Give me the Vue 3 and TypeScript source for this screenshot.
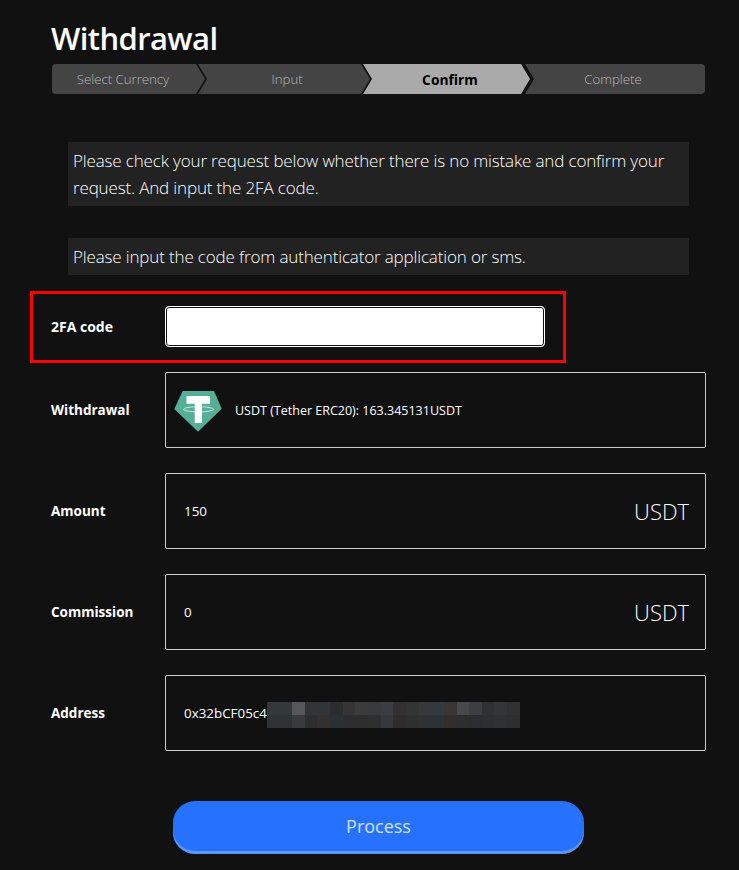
<script setup lang="ts">
const steps = [
  { label: 'Select Currency', cls: 'first' },
  { label: 'Input', cls: 'second' },
  { label: 'Confirm', cls: 'third active' },
  { label: 'Complete', cls: 'last' }
]

// pixelated part of the address, two rows of blocks
const topRow = ['#33383b', '#33383b', '#55575a', '#333436', '#313538', '#2d2d30', '#353535', '#3c3b3b', '#3a3a3c', '#3c3d42', '#313131', '#333534', '#363839', '#2f3b3e', '#3b3434', '#47484a', '#3e3e42', '#2f3133', '#333537', '#303132']
const bottomRow = ['#2f3336', '#2f3336', '#383a3b', '#2c2d2f', '#333130', '#2b3033', '#2c2d30', '#2d2d2d', '#2e3030', '#37383e', '#2e2d2c', '#2e2f2f', '#2f3234', '#2b3336', '#332d2d', '#2d2e30', '#2c2d31', '#2c2e30', '#2f3032', '#2d2e2f']
const blur = [...topRow, ...bottomRow]
</script>

<template>
  <div class="page">
    <h1>Withdrawal</h1>

    <ul class="stepper">
      <li v-for="s in steps" :key="s.label" :class="['step', s.cls]">{{ s.label }}</li>
    </ul>

    <p class="notice first-notice">
      Please check your request below whether there is no mistake and confirm your request. And input the 2FA code.
    </p>
    <p class="notice second-notice">Please input the code from authenticator application or sms.</p>

    <div class="code-row">
      <label class="label" for="code">2FA code</label>
      <input id="code" class="code-input" type="text" />
      <div class="highlight"></div>
    </div>

    <div class="row">
      <span class="label">Withdrawal</span>
      <div class="field">
        <svg class="coin" viewBox="0 0 48 42" width="48" height="42">
          <polygon points="8.7,0 40,0 47.7,17.8 24,40.7 0.3,18" fill="#55ae96" />
          <path d="M12.500 5h23.500v7.700h-8V32h-7.300V12.700h-8.200z" fill="#fff" />
          <ellipse cx="24.500" cy="18.300" rx="15" ry="2.600" fill="none" stroke="#fff" stroke-width="0.800" opacity="0.850" />
        </svg>
        <span class="coin-text">USDT (Tether ERC20): 163.345131USDT</span>
      </div>
    </div>

    <div class="row">
      <span class="label">Amount</span>
      <div class="field value">
        <span>150</span>
        <span class="unit">USDT</span>
      </div>
    </div>

    <div class="row">
      <span class="label">Commission</span>
      <div class="field value">
        <span>0</span>
        <span class="unit">USDT</span>
      </div>
    </div>

    <div class="row">
      <span class="label">Address</span>
      <div class="field address">
        <span>0x32bCF05c4</span>
        <div class="mosaic">
          <i v-for="(c, i) in blur" :key="i" :style="{ background: c }"></i>
        </div>
      </div>
    </div>

    <div class="actions">
      <button class="process" type="button">Process</button>
    </div>
  </div>
</template>

<style>
html,
body {
  background: #111;
}
</style>

<style scoped>
.page {
  box-sizing: border-box;
  width: 739px;
  height: 870px;
  padding: 18px 33px 0 51px;
  background: #111;
  color: #fff;
  font-family: "Open Sans", "Liberation Sans", sans-serif;
  overflow: hidden;
}

h1 {
  margin: 0;
  height: 46px;
  font-size: 31px;
  line-height: 40px;
  font-weight: 600;
  letter-spacing: -0.6px;
}

.stepper {
  display: flex;
  width: 653px;
  height: 30px;
  margin: 0 0 0 1px;
  padding: 0;
  list-style: none;
  border-radius: 4px;
  overflow: hidden;
}

.step {
  box-sizing: border-box;
  display: flex;
  align-items: center;
  justify-content: center;
  margin-left: -6px;
  background: #444;
  color: #b8b8b8;
  font-size: 13.200px;
  font-weight: 300;
  clip-path: polygon(0 0, calc(100% - 9px) 0, 100% 50%, calc(100% - 9px) 100%, 0 100%, 9px 50%);
}

.step.first {
  width: 153px;
  margin-left: 0;
  padding-right: 11px;
  clip-path: polygon(0 0, calc(100% - 9px) 0, 100% 50%, calc(100% - 9px) 100%, 0 100%);
}

.step.second {
  width: 172px;
  margin-left: -7px;
  padding-left: 6px;
}

.step.third {
  width: 167px;
  margin-left: -7px;
  padding-left: 7px;
}

.step.last {
  width: 180px;
  margin-left: -5px;
  padding-right: 4px;
  clip-path: polygon(0 0, 100% 0, 100% 100%, 0 100%, 9px 50%);
}

.step.active {
  background: #aaa;
  color: #000;
  font-size: 13.800px;
  font-weight: 700;
}

.notice {
  box-sizing: border-box;
  width: 621px;
  margin: 0 0 0 17px;
  padding: 6px 5px;
  background: #222;
  font-size: 17px;
  line-height: 27px;
  font-weight: 300;
  letter-spacing: -0.150px;
}

.first-notice {
  height: 64px;
  margin-top: 48px;
  padding-top: 5px;
}

.second-notice {
  height: 37px;
  margin-top: 32px;
  padding-top: 5px;
}

.label {
  font-size: 13.500px;
  font-weight: 700;
}

.code-row {
  position: relative;
  display: grid;
  grid-template-columns: 114px 380px;
  align-items: center;
  height: 41px;
  margin-top: 31px;
}

.code-row .label {
  font-size: 14px;
}

.code-input {
  box-sizing: border-box;
  width: 380px;
  height: 41px;
  margin: 0;
  padding: 0 8px;
  background: #fff;
  border: 1px solid #fff;
  border-radius: 4px;
  outline: none;
  box-shadow: inset 0 0 0 1px #111;
}

.highlight {
  position: absolute;
  left: -21px;
  top: -15px;
  width: 536px;
  height: 72px;
  box-sizing: border-box;
  border: 3px solid #f00;
  pointer-events: none;
}

.row {
  display: grid;
  grid-template-columns: 114px 541px;
  align-items: center;
  height: 76px;
  margin-bottom: 25px;
}

.code-row + .row {
  margin-top: 25px;
}

.field {
  box-sizing: border-box;
  display: flex;
  align-items: center;
  height: 76px;
  border: 1px solid #ccc;
  border-radius: 2px;
  font-size: 13.400px;
  font-weight: 400;
}

.field.value,
.field.address {
  padding: 0 16px 0 18px;
}

.field.value {
  justify-content: space-between;
}

.unit {
  font-size: 22px;
  font-weight: 300;
}

.coin {
  margin: 3px 0 0 8px;
  flex: none;
}

.coin-text {
  margin-left: 13px;
  font-size: 12.500px;
  font-weight: 400;
}

.mosaic {
  display: grid;
  grid-template-columns: repeat(20, 12.650px);
  grid-auto-rows: 13px;
  margin-top: 3px;
}

.mosaic i {
  display: block;
}

.actions {
  display: flex;
  margin-top: 50px;
  padding-left: 122px;
}

.process {
  width: 411px;
  height: 53px;
  padding: 0 0 3px;
  border: 0;
  border-radius: 22px;
  background: #2672ff;
  box-shadow: inset 0 -3px 0 #5c96ff;
  color: #cfe0ff;
  font-family: inherit;
  font-size: 18px;
  font-weight: 400;
}
</style>
